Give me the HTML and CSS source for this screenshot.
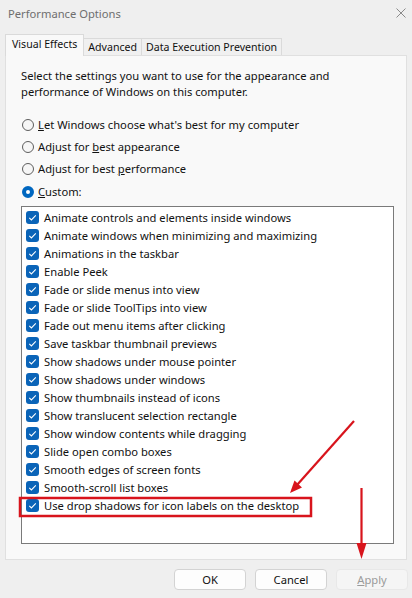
FILE: index.html
```html
<!DOCTYPE html>
<html>
<head>
<meta charset="utf-8">
<link rel="stylesheet" href="styles.css">
</head>
<body>
<div class="window">
  <div class="titlebar">
    <span class="title">Performance Options</span>
    <svg class="close" width="10" height="10" viewBox="0 0 10 10"><path d="M0.5 0.5L9.5 9.5M9.5 0.5L0.5 9.5" stroke="#8a8a8a" stroke-width="1"/></svg>
  </div>
  <div class="tabs">
    <div class="tab active">Visual Effects</div>
    <div class="tab">Advanced</div>
    <div class="tab">Data Execution Prevention</div>
  </div>
  <div class="panel">
    <p class="desc">Select the settings you want to use for the appearance and performance of Windows on this computer.</p>
    <div class="radios">
      <div class="radio"><span class="dot"></span><span><u>L</u>et Windows choose what's best for my computer</span></div>
      <div class="radio"><span class="dot"></span><span>Adjust for <u>b</u>est appearance</span></div>
      <div class="radio"><span class="dot"></span><span>Adjust for best <u>p</u>erformance</span></div>
      <div class="radio custom"><span class="dot on"></span><span><u>C</u>ustom:</span></div>
    </div>
    <div class="listbox">
      <div class="item"><span class="cb"></span>Animate controls and elements inside windows</div>
      <div class="item"><span class="cb"></span>Animate windows when minimizing and maximizing</div>
      <div class="item"><span class="cb"></span>Animations in the taskbar</div>
      <div class="item"><span class="cb"></span>Enable Peek</div>
      <div class="item"><span class="cb"></span>Fade or slide menus into view</div>
      <div class="item"><span class="cb"></span>Fade or slide ToolTips into view</div>
      <div class="item"><span class="cb"></span>Fade out menu items after clicking</div>
      <div class="item"><span class="cb"></span>Save taskbar thumbnail previews</div>
      <div class="item"><span class="cb"></span>Show shadows under mouse pointer</div>
      <div class="item"><span class="cb"></span>Show shadows under windows</div>
      <div class="item"><span class="cb"></span>Show thumbnails instead of icons</div>
      <div class="item"><span class="cb"></span>Show translucent selection rectangle</div>
      <div class="item"><span class="cb"></span>Show window contents while dragging</div>
      <div class="item"><span class="cb"></span>Slide open combo boxes</div>
      <div class="item"><span class="cb"></span>Smooth edges of screen fonts</div>
      <div class="item"><span class="cb"></span>Smooth-scroll list boxes</div>
      <div class="item"><span class="cb"></span>Use drop shadows for icon labels on the desktop</div>
    </div>
  </div>
  <div class="buttons">
    <button class="btn">OK</button>
    <button class="btn">Cancel</button>
    <button class="btn disabled"><u>A</u>pply</button>
  </div>
  <svg class="annot" width="412" height="598" viewBox="0 0 412 598">
    <rect x="20" y="498" width="291" height="18" fill="none" stroke="#d8141c" stroke-width="2.5"/>
    <line x1="354" y1="421" x2="297" y2="485" stroke="#d8141c" stroke-width="2.2"/>
    <polygon points="290,493 302,487.5 294.5,480.5" fill="#d8141c"/>
    <line x1="361.5" y1="488" x2="361.5" y2="546" stroke="#d8141c" stroke-width="2.2"/>
    <polygon points="361.5,559 356.5,543 366.5,543" fill="#d8141c"/>
  </svg>
</div>
</body>
</html>
```

FILE: styles.css
```css
* { box-sizing: border-box; }
html, body { margin: 0; padding: 0; }
body {
  background: #efefef;
  font-family: "Noto Sans", "Open Sans", sans-serif;
  font-size: 11.2px;
  color: #111;
}
.window {
  position: relative;
  width: 412px;
  height: 598px;
  overflow: hidden;
}
.titlebar {
  height: 27px;
  display: flex;
  align-items: center;
  justify-content: space-between;
  padding: 0 6px 1px 8px;
}
.title {
  color: #6e6e6e;
  font-size: 11.2px;
}
.tabs {
  display: flex;
  align-items: flex-end;
  height: 28px;
  padding-left: 5px;
}
.tab {
  height: 17px;
  padding: 0 4px;
  border: 1px solid #dadada;
  border-bottom: none;
  margin-left: -1px;
  background: #f0f0f0;
  display: flex;
  align-items: center;
  white-space: nowrap;
  font-size: 10.6px;
}
.tab:first-child { margin-left: 0; }
.tab.active {
  background: #f9f9f9;
  padding: 0 6px 3px;
  position: relative;
  z-index: 1;
  margin-bottom: -1px;
  height: 22px;
}
.panel {
  margin: 0 5px;
  height: 505px;
  background: #f9f9f9;
  border: 1px solid #e0e0e0;
  padding: 12px 0 0 15px;
}
.desc {
  margin: 0;
  width: 330px;
  line-height: 16px;
}
.radios {
  margin-top: 14px;
  display: flex;
  flex-direction: column;
}
.radio {
  display: flex;
  align-items: center;
  gap: 4px;
  height: 22px;
  line-height: 14px;
}
.radio.custom {
  padding-top: 2px;
}
.dot {
  width: 12px;
  height: 12px;
  border-radius: 50%;
  border: 1px solid #5e5e5e;
  background: #f6f6f6;
  margin-left: 1px;
}
.dot.on {
  border: 4px solid #0067c0;
  background: #fff;
}
.listbox {
  margin-top: 4px;
  width: 373px;
  height: 338px;
  background: #fff;
  border: 1px solid #7a7a7a;
  padding-top: 1px;
}
.item {
  height: 18px;
  display: flex;
  align-items: center;
  padding-left: 4px;
  white-space: nowrap;
}
.cb {
  width: 13px;
  height: 13px;
  border-radius: 3px;
  background: #0a64b8;
  margin-right: 5px;
  flex: none;
  background-image: url("data:image/svg+xml;utf8,<svg xmlns='http://www.w3.org/2000/svg' viewBox='0 0 13 13'><path d='M3.3 6.8 L5.4 8.9 L9.8 4.4' fill='none' stroke='white' stroke-width='1.1'/></svg>");
}
.buttons {
  display: flex;
  justify-content: flex-end;
  gap: 9px;
  padding: 9px 4px 0 0;
}
.btn {
  width: 72px;
  height: 21px;
  border: 1px solid #d3d3d3;
  border-radius: 4px;
  background: #fdfdfd;
  font-family: "Noto Sans", "Open Sans", sans-serif;
  font-size: 11.2px;
  color: #111;
  padding: 0;
}
.btn.disabled {
  background: #f5f5f5;
  border-color: #e8e8e8;
  color: #9a9a9a;
}
.annot {
  position: absolute;
  left: 0;
  top: 0;
  pointer-events: none;
}
```
